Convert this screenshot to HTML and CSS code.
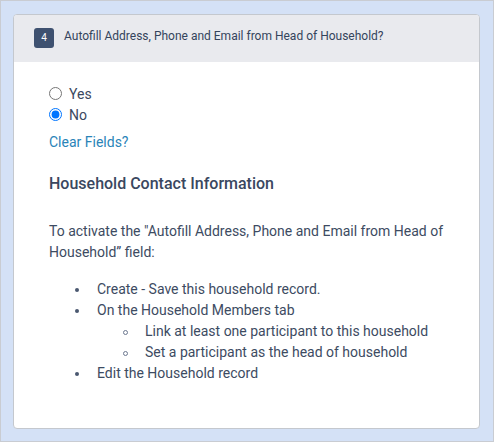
FILE: index.html
```html
<!DOCTYPE html>
<html lang="en">
  <head>
    <meta charset="UTF-8">
    <title>Household Contact</title>
    <link rel="stylesheet" href="styles.css">
  </head>
  <body>
    <div class="card">
      <!-- Question header -->
      <div class="card-header">
        <span class="badge">4</span>
        <span class="question">Autofill Address, Phone and Email from Head of Household?</span>
      </div>

      <div class="card-body">
        <label class="radio"><input type="radio" name="autofill"> Yes</label>
        <label class="radio"><input type="radio" name="autofill" checked> No</label>
        <a class="clear-link" href="#">Clear Fields?</a>

        <h2>Household Contact Information</h2>
        <p>To activate the "Autofill Address, Phone and Email from Head of Household” field:</p>
        <ul>
          <li>Create - Save this household record.</li>
          <li>On the Household Members tab
            <ul>
              <li>Link at least one participant to this household</li>
              <li>Set a participant as the head of household</li>
            </ul>
          </li>
          <li>Edit the Household record</li>
        </ul>
      </div>
    </div>
  </body>
</html>
```

FILE: styles.css
```css
body {
  margin: 0;
  height: 442px;
  box-sizing: border-box;
  border: 1px solid #c9ccd2;
  background-color: #d4e1f6;
  padding: 13px 13px 12px 12px;
  font-family: Roboto, 'Liberation Sans', sans-serif;
  color: #3d4b62;
}

.card {
  height: 415px;
  box-sizing: border-box;
  background-color: #fff;
  border: 1px solid #c4c8ce;
  border-radius: 4px;
  overflow: hidden;
}

.card-header {
  display: flex;
  align-items: center;
  height: 47px;
  box-sizing: border-box;
  padding: 0 0 6px 20px;
  background-color: #e9eaee;
}

.badge {
  width: 20px;
  height: 20px;
  border-radius: 3px;
  background-color: #3e5170;
  color: #fff;
  font-size: 10px;
  display: flex;
  align-items: center;
  justify-content: center;
  margin-top: 4px;
}

.question {
  margin-left: 10px;
  font-size: 12px;
  color: #34445c;
}

.card-body {
  padding: 21px 35px 20px;
  font-size: 14px;
}

.radio {
  display: flex;
  align-items: center;
  height: 21px;
  color: #3b4860;
}

.radio input {
  margin: 0 7px 0 0;
  width: 13px;
  height: 13px;
}

.clear-link {
  display: block;
  margin-top: 9px;
  color: #2a84b8;
  text-decoration: none;
}

h2 {
  font-size: 16px;
  font-weight: 500;
  margin: 24px 0 0;
  color: #3a4760;
}

p {
  margin: 28px 0 0;
  line-height: 21px;
}

ul {
  margin: 16px 0 0;
  padding-left: 48px;
  line-height: 21px;
  list-style: none;
}

li::before {
  content: "";
  display: inline-block;
  width: 4px;
  height: 4px;
  border-radius: 50%;
  background-color: #4a5870;
  margin-left: -22px;
  margin-right: 18px;
  vertical-align: middle;
}

ul ul {
  margin: 0;
}

ul ul li::before {
  width: 3px;
  height: 3px;
  background-color: transparent;
  border: 1px solid #6c7890;
  margin-right: 17px;
}
```
